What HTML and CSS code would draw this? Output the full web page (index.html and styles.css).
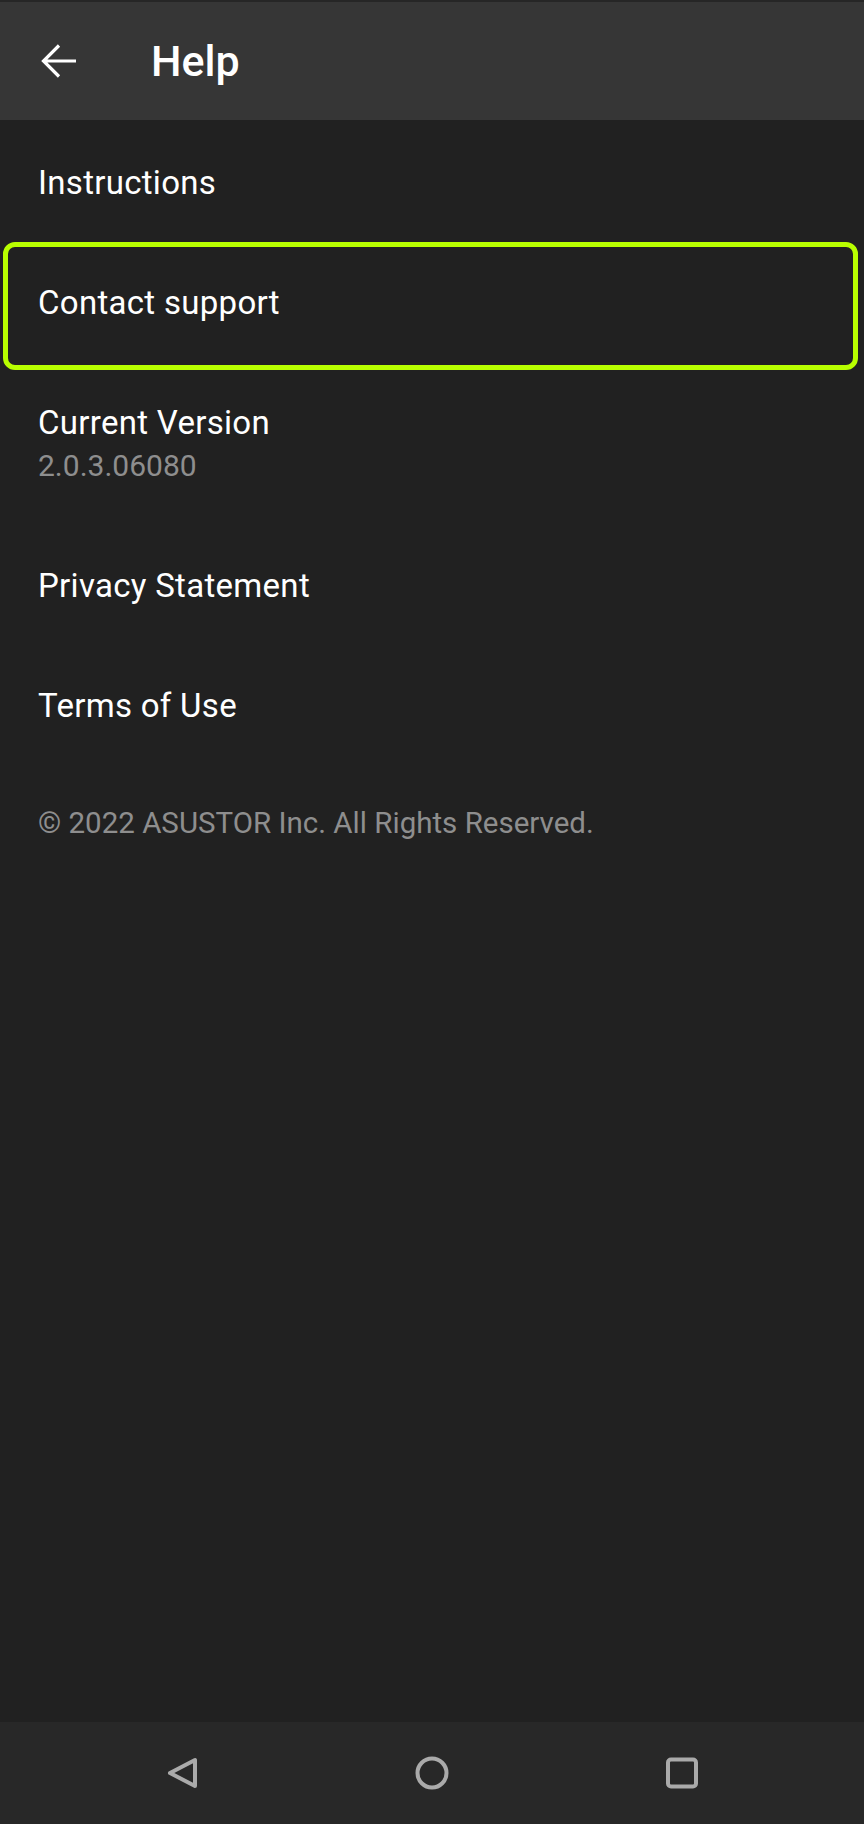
FILE: index.html
```html
<!DOCTYPE html>
<html lang="en">
<head>
  <meta charset="UTF-8" />
  <meta name="viewport" content="width=device-width, initial-scale=1.0"/>
  <title>Help</title>
  <link rel="stylesheet" href="styles.css">
</head>
<body>
  <div class="status-strip"></div>
  <header class="app-bar">
    <button class="back-btn" aria-label="Back">
      <svg width="36" height="34" viewBox="0 0 36 34">
        <path d="M18 1.5 L2.5 17 L18 32.5 M2.5 17 H35" fill="none" stroke="#fff" stroke-width="3.2" stroke-linecap="butt" stroke-linejoin="miter"/>
      </svg>
    </button>
    <h1 class="title">Help</h1>
  </header>

  <main class="content">
    <div class="row">Instructions</div>
    <div class="row focused">Contact support</div>
    <div class="row version-row">
      <div class="row-title">Current Version</div>
      <div class="row-sub">2.0.3.06080</div>
    </div>
    <div class="row">Privacy Statement</div>
    <div class="row">Terms of Use</div>
    <p class="copyright">© 2022 ASUSTOR Inc. All Rights Reserved.</p>
  </main>

  <nav class="nav-bar">
    <div class="nav-btn">
      <svg width="36" height="36" viewBox="0 0 36 36">
        <path d="M31 5 V31 L6 18 Z" fill="none" stroke="#aaa" stroke-width="4" stroke-linejoin="round"/>
      </svg>
    </div>
    <div class="nav-btn">
      <svg width="36" height="36" viewBox="0 0 36 36">
        <circle cx="18" cy="18" r="14.5" fill="none" stroke="#aaa" stroke-width="4"/>
      </svg>
    </div>
    <div class="nav-btn">
      <svg width="36" height="36" viewBox="0 0 36 36">
        <rect x="4" y="4.5" width="28" height="27" rx="3" fill="none" stroke="#aaa" stroke-width="4"/>
      </svg>
    </div>
  </nav>
</body>
</html>
```

FILE: styles.css
```css
body {
  margin: 0;
  height: 100vh;
  display: flex;
  flex-direction: column;
  font-family: Roboto, "Noto Sans", sans-serif;
  background-color: #212121;
  color: #fff;
}
.status-strip {
  height: 2px;
  background: #262626;
}
.app-bar {
  height: 118px;
  display: flex;
  align-items: center;
  background: #363636;
}
.back-btn {
  margin-left: 41px;
  padding: 0;
  border: none;
  background: none;
  width: 36px;
  height: 34px;
  display: flex;
}
.title {
  margin: 0 0 0 74px;
  font-size: 43px;
  font-weight: 500;
}
.content {
  flex: 1;
  padding-top: 2px;
}
.row {
  position: relative;
  height: 120px;
  box-sizing: border-box;
  padding: 0 38px;
  display: flex;
  align-items: center;
  font-size: 33px;
  letter-spacing: 0.3px;
}
.focused::after {
  content: "";
  position: absolute;
  left: 3px;
  right: 6px;
  top: 0;
  bottom: -8px;
  border: 5px solid #b8ff00;
  border-radius: 12px;
}
.version-row {
  height: 163px;
  flex-direction: column;
  align-items: flex-start;
  justify-content: center;
}
.row-title {
  line-height: 38px;
}
.row-sub {
  margin-top: 6px;
  line-height: 36px;
  font-size: 30px;
  letter-spacing: 0;
  color: #8e8e8e;
}
.copyright {
  margin: 40px 0 0;
  padding: 0 38px;
  line-height: 36px;
  font-size: 29.5px;
  color: #8e8e8e;
}
.nav-bar {
  height: 102px;
  background: #282828;
  display: flex;
  justify-content: center;
  align-items: center;
}
.nav-btn {
  width: 250px;
  display: flex;
  justify-content: center;
}
```
